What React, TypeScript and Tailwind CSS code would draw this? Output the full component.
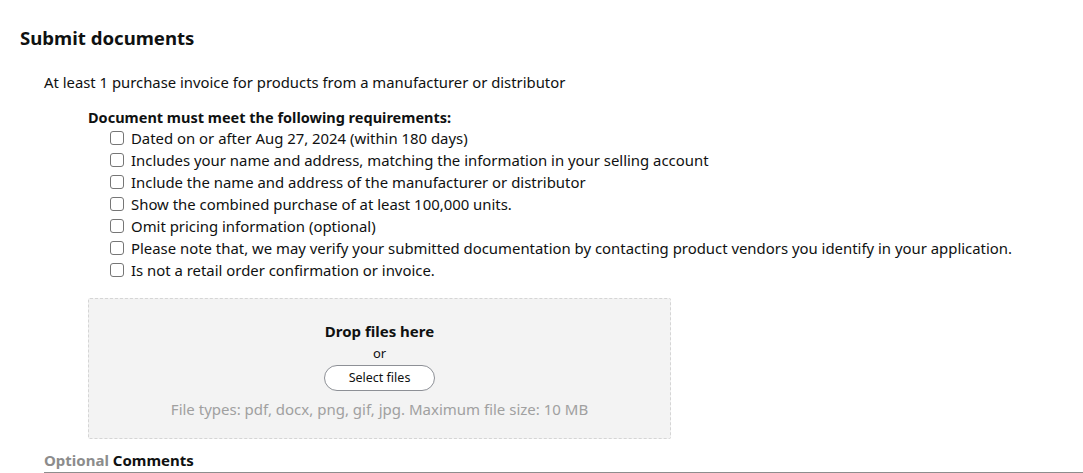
import React from "react";

const items = [
  "Dated on or after Aug 27, 2024 (within 180 days)",
  "Includes your name and address, matching the information in your selling account",
  "Include the name and address of the manufacturer or distributor",
  "Show the combined purchase of at least 100,000 units.",
  "Omit pricing information (optional)",
  "Please note that, we may verify your submitted documentation by contacting product vendors you identify in your application.",
  "Is not a retail order confirmation or invoice.",
];

export default function App() {
  return (
    <div
      className="w-[1083px] h-[473px] overflow-hidden bg-white text-[#0f1111]"
      style={{ fontFamily: '"Noto Sans", "Open Sans", sans-serif' }}
    >
      <div className="pl-[20px] pt-[26px]">
        <h1 className="text-[18.6px] leading-[24px] font-bold">Submit documents</h1>
      </div>
      <div className="pl-[44px] pt-[21px]">
        <p className="text-[14.85px] leading-[22px]">
          At least 1 purchase invoice for products from a manufacturer or distributor
        </p>
        <div className="pl-[44px] pt-[14px]">
          <p className="text-[14.5px] leading-[20px] font-bold">Document must meet the following requirements:</p>
          <ul className="pl-[22px]">
            {items.map((t) => (
              <li key={t} className="flex items-center gap-[7px] h-[22px] text-[14.9px]">
                <span className="w-[14px] h-[14px] border border-[#767676] rounded-[3px] bg-white shrink-0" />
                <span>{t}</span>
              </li>
            ))}
          </ul>
          <div className="mt-[17px] w-[583px] h-[141px] bg-[#f3f3f3] border border-dashed border-[#d5d5d5] rounded-[2px] flex flex-col items-center pt-[22px]">
            <p className="text-[15px] leading-[20px] font-bold">Drop files here</p>
            <p className="text-[13px] leading-[18px] mt-[3px]">or</p>
            <button className="mt-[3px] w-[111px] h-[26px] rounded-full border border-[#8d9096] bg-white text-[12.5px]">
              Select files
            </button>
            <p className="mt-[8px] text-[15px] leading-[20px] text-[#a0a0a0]">
              File types: pdf, docx, png, gif, jpg. Maximum file size: 10 MB
            </p>
          </div>
        </div>
        <div className="pt-[11px] text-[15px] leading-[20px] font-bold">
          <span className="text-[#8c8c8c]">Optional</span> <span>Comments</span>
        </div>
        <div className="mt-[2px] h-[2px] bg-[#8d8d8d]" />
      </div>
    </div>
  );
}
